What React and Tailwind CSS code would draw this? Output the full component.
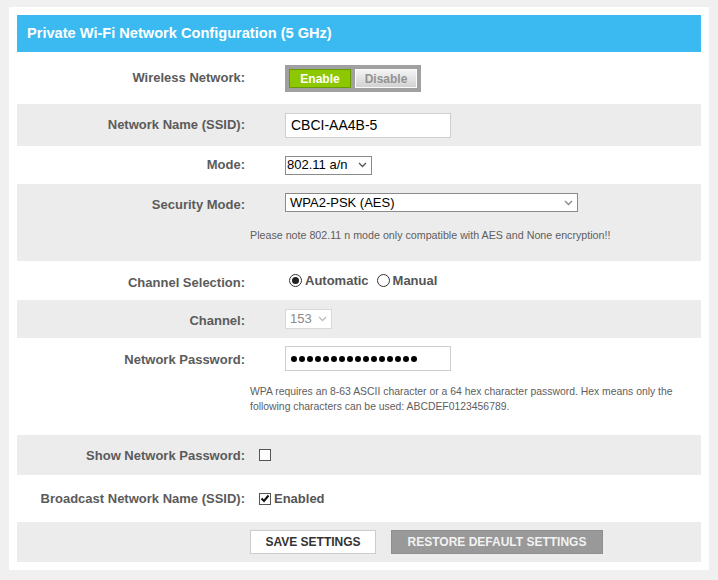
import React from "react";

const Chevron = ({ color = "#555" }) => (
  <svg width="9" height="6" viewBox="0 0 9 6" className="shrink-0">
    <path d="M1 1 L4.5 4.5 L8 1" fill="none" stroke={color} strokeWidth="1.3" />
  </svg>
);

const Label = ({ children }) => (
  <div className="w-[228px] shrink-0 text-right text-[13px] font-bold text-[#5b5b5b]">{children}</div>
);

const Row = ({ gray, h, items = "items-center", children }) => (
  <div className={`flex ${items} ${h} ${gray ? "bg-[#ececec]" : "bg-white"}`}>{children}</div>
);

export default function App() {
  return (
    <div className="min-h-[580px] bg-[#f0f0f0] pt-[7px] pl-[9px] font-['Liberation_Sans',Arial,sans-serif]">
      <div className="w-[700px] bg-white px-[8px] py-[8px]">
        <div className="flex h-[37px] items-center bg-[#3bbaf2] pl-[10px] text-[14.6px] font-bold text-white">
          Private Wi-Fi Network Configuration (5 GHz)
        </div>

        {/* Wireless Network */}
        <Row h="h-[52px]">
          <Label>Wireless Network:</Label>
          <div className="ml-[40px] flex gap-[4px] border-[4px] border-[#a0a0a0] bg-[#a0a0a0]">
            <button className="h-[19px] w-[62px] border border-[#6a9c00] bg-[#8cc700] text-[12px] font-bold text-white">
              Enable
            </button>
            <button className="h-[19px] w-[62px] border border-[#fafafa] bg-gradient-to-b from-[#f4f4f4] to-[#d2d2d2] text-[12px] font-bold text-[#939393]">
              Disable
            </button>
          </div>
        </Row>

        {/* SSID */}
        <Row gray h="h-[42px]">
          <Label>Network Name (SSID):</Label>
          <div className="ml-[40px] flex h-[25px] w-[166px] items-center border border-[#cfcfcf] bg-white pl-[5px] text-[14px] text-black">
            CBCI-AA4B-5
          </div>
        </Row>

        {/* Mode */}
        <Row h="h-[38px]">
          <Label>Mode:</Label>
          <div className="ml-[40px] flex h-[19px] w-[87px] items-center justify-between border border-[#8a8a8a] bg-white pl-[1px] pr-[4px] text-[13px] text-black">
            <span>802.11 a/n</span>
            <Chevron />
          </div>
        </Row>

        {/* Security Mode */}
        <Row gray h="h-[77px]" items="items-start">
          <Label>
            <div className="pt-[11px]">Security Mode:</div>
          </Label>
          <div className="flex flex-col pt-[9px]">
            <div className="ml-[40px] flex h-[19px] w-[293px] items-center justify-between border border-[#8a8a8a] bg-white pl-[4px] pr-[4px] text-[13px] text-black">
              <span>WPA2-PSK (AES)</span>
              <Chevron color="#888" />
            </div>
            <div className="ml-[5px] mt-[16px] text-[10.7px] leading-[15px] text-[#5e5e5e]">
              Please note 802.11 n mode only compatible with AES and None encryption!!
            </div>
          </div>
        </Row>

        {/* Channel Selection */}
        <Row h="h-[39px]">
          <Label>
            <div className="pt-[4px]">Channel Selection:</div>
          </Label>
          <div className="ml-[44px] flex items-center text-[13px] font-bold text-[#555]">
            <span className="mr-[3px] flex h-[13px] w-[13px] items-center justify-center rounded-full border border-[#333] bg-white">
              <span className="h-[7px] w-[7px] rounded-full bg-[#222]" />
            </span>
            <span>Automatic</span>
            <span className="ml-[8px] mr-[3px] h-[13px] w-[13px] rounded-full border border-[#333] bg-white" />
            <span>Manual</span>
          </div>
        </Row>

        {/* Channel */}
        <Row gray h="h-[38px]">
          <Label>
            <div className="pt-[3px]">Channel:</div>
          </Label>
          <div className="ml-[40px] flex h-[20px] w-[47px] items-center justify-between border border-[#d8d8d8] bg-white pl-[4px] pr-[4px] text-[13px] text-[#8a8a8a]">
            <span>153</span>
            <Chevron color="#bbb" />
          </div>
        </Row>

        {/* Password */}
        <Row h="h-[97px]" items="items-start">
          <Label>
            <div className="pt-[12px]">Network Password:</div>
          </Label>
          <div className="flex flex-col pt-[8px]">
            <div className="ml-[40px] flex h-[25px] w-[166px] items-center gap-[2px] border border-[#cfcfcf] bg-white pl-[5px]">
              {Array.from({ length: 16 }).map((_, i) => (
                <span key={i} className="h-[6px] w-[6px] rounded-full bg-black" />
              ))}
            </div>
            <div className="ml-[5px] mt-[13px] w-[440px] text-[10.4px] leading-[15px] text-[#5e5e5e]">
              WPA requires an 8-63 ASCII character or a 64 hex character password. Hex means only the following
              characters can be used: ABCDEF0123456789.
            </div>
          </div>
        </Row>

        {/* Show password */}
        <Row gray h="h-[40px]">
          <Label>
            <div className="pt-[2px]">Show Network Password:</div>
          </Label>
          <span className="ml-[14px] h-[12px] w-[12px] border border-[#555] bg-white" />
        </Row>

        {/* Broadcast */}
        <Row h="h-[47px]">
          <Label>Broadcast Network Name (SSID):</Label>
          <div className="ml-[14px] flex items-center text-[13px] font-bold text-[#555]">
            <span className="mr-[3px] flex h-[12px] w-[12px] items-center justify-center border border-[#555] bg-white">
              <svg width="10" height="9" viewBox="0 0 10 9">
                <path d="M1.5 4.5 L4 7 L8.5 1.5" fill="none" stroke="#111" strokeWidth="2" />
              </svg>
            </span>
            <span>Enabled</span>
          </div>
        </Row>

        {/* Buttons */}
        <Row gray h="h-[40px]">
          <div className="w-[233px] shrink-0" />
          <button className="h-[24px] w-[126px] border border-[#cccccc] bg-white text-[12px] font-bold text-[#333]">
            SAVE SETTINGS
          </button>
          <button className="ml-[15px] h-[24px] w-[212px] border border-[#8f8f8f] bg-[#999999] text-[12px] font-bold text-[#f2f2f2]">
            RESTORE DEFAULT SETTINGS
          </button>
        </Row>
      </div>
    </div>
  );
}
